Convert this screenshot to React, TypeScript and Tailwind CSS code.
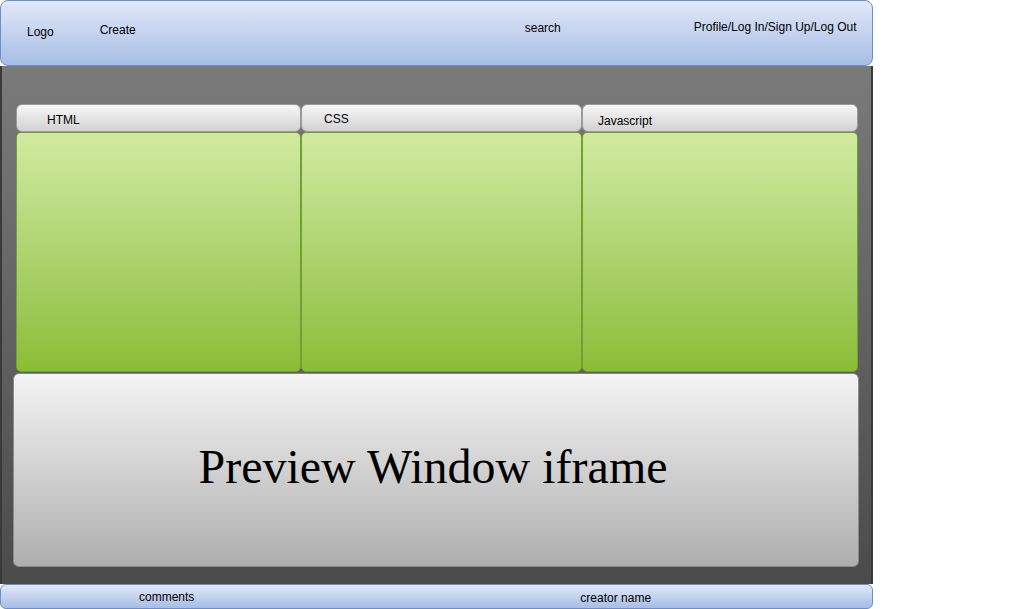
const cols = [
  { label: "HTML", width: "w-[285px]", pad: "pl-[30px]", pt: "pt-[8px]" },
  { label: "CSS", width: "w-[281px]", pad: "pl-[22px]", pt: "pt-[7px]" },
  { label: "Javascript", width: "w-[276px]", pad: "pl-[15px]", pt: "pt-[9px]" },
];

export default function App() {
  return (
    <div className="w-[1035px] h-[609px] bg-white font-['Liberation_Sans',Arial,sans-serif] text-[12px] text-black">
      <div className="w-[873px] h-[609px] flex flex-col">
        {/* header */}
        <div className="h-[66px] shrink-0 rounded-[8px] border border-[#6c8ecb] bg-gradient-to-b from-[#e2e9f9] to-[#a7bde4] flex items-start leading-[14px]">
          <span className="ml-[26px] mt-[24px]">Logo</span>
          <span className="ml-[46px] mt-[22px]">Create</span>
          <span className="ml-[389px] mt-[20px]">search</span>
          <span className="ml-[133px] mt-[19px]">Profile/Log In/Sign Up/Log Out</span>
        </div>

        {/* workspace */}
        <div className="flex-1 flex flex-col bg-gradient-to-b from-[#7a7a7a] to-[#4b4b4b] border-x-2 border-[#3a3a3a]">
          <div className="flex ml-[14px] mt-[38px]">
            {cols.map((c) => (
              <div key={c.label} className={`${c.width} flex flex-col`}>
                <div
                  className={`h-[28px] rounded-[6px] border border-[#9a9a9a] bg-gradient-to-b from-[#f7f7f7] to-[#d2d2d2] leading-[14px] ${c.pad} ${c.pt}`}
                >
                  {c.label}
                </div>
                <div className="h-[240px] rounded-[5px] border border-[#73a032] bg-gradient-to-b from-[#d1eaa0] to-[#8bbd35]" />
              </div>
            ))}
          </div>
          <div className="ml-[11px] mt-px w-[846px] h-[194px] rounded-[6px] border border-[#8a8a8a] bg-gradient-to-b from-[#f4f4f4] to-[#afafaf] flex items-center justify-center pb-[6px]">
            <span className="font-['Liberation_Serif','Times_New_Roman',serif] text-[48px] leading-none pr-[6px]">
              Preview Window iframe
            </span>
          </div>
        </div>

        {/* footer */}
        <div className="h-[25px] shrink-0 rounded-[6px] border border-[#6c8ecb] bg-gradient-to-b from-[#e2e9f9] to-[#a7bde4] flex items-start leading-[14px]">
          <span className="ml-[138px] mt-[5px]">comments</span>
          <span className="ml-[386px] mt-[6px]">creator name</span>
        </div>
      </div>
    </div>
  );
}
